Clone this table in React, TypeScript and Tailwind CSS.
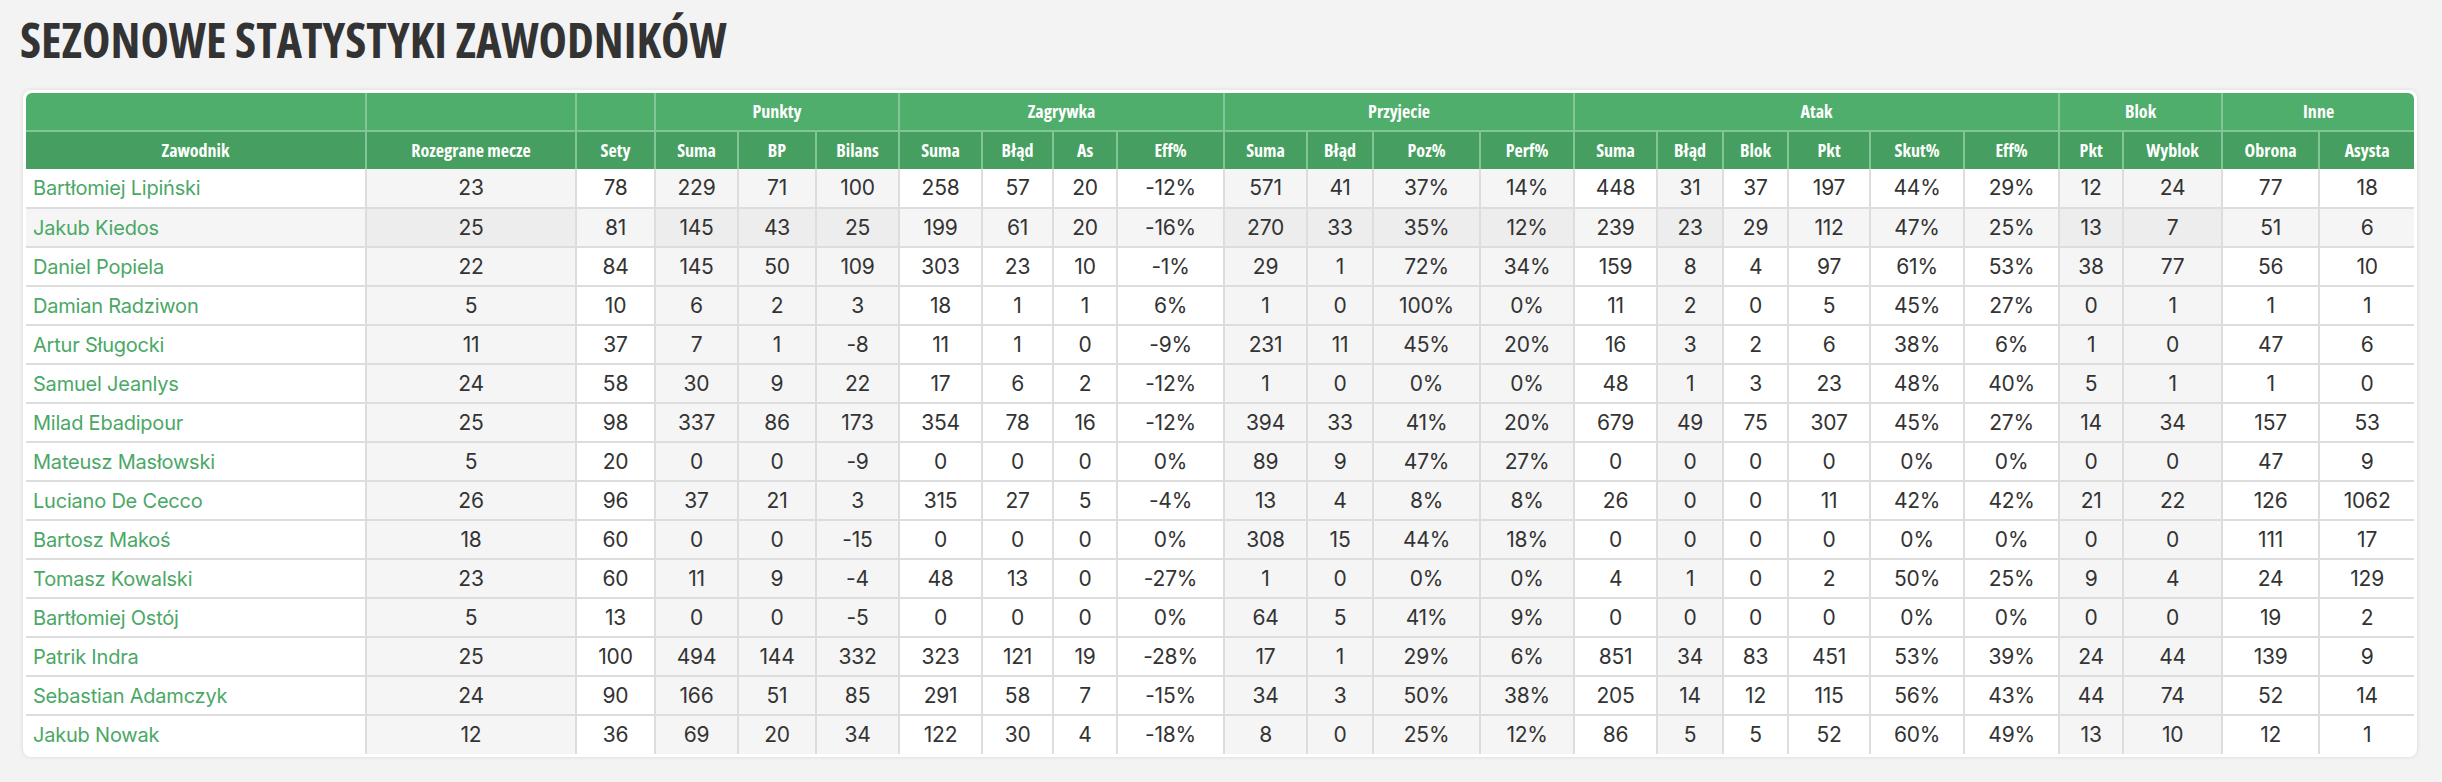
const groups = [
  { label: "", span: 1 },
  { label: "", span: 1 },
  { label: "", span: 1 },
  { label: "Punkty", span: 3 },
  { label: "Zagrywka", span: 4 },
  { label: "Przyjecie", span: 4 },
  { label: "Atak", span: 6 },
  { label: "Blok", span: 2 },
  { label: "Inne", span: 2 },
];

const columns = [
  { label: "Zawodnik", w: "w-[340px]" },
  { label: "Rozegrane mecze", w: "w-[210px]" },
  { label: "Sety", w: "w-[79px]" },
  { label: "Suma", w: "w-[83px]" },
  { label: "BP", w: "w-[78px]" },
  { label: "Bilans", w: "w-[83px]" },
  { label: "Suma", w: "w-[83px]" },
  { label: "Błąd", w: "w-[71px]" },
  { label: "As", w: "w-[64px]" },
  { label: "Eff%", w: "w-[107px]" },
  { label: "Suma", w: "w-[83px]" },
  { label: "Błąd", w: "w-[66px]" },
  { label: "Poz%", w: "w-[107px]" },
  { label: "Perf%", w: "w-[94px]" },
  { label: "Suma", w: "w-[83px]" },
  { label: "Błąd", w: "w-[66px]" },
  { label: "Blok", w: "w-[65px]" },
  { label: "Pkt", w: "w-[82px]" },
  { label: "Skut%", w: "w-[94px]" },
  { label: "Eff%", w: "w-[95px]" },
  { label: "Pkt", w: "w-[64px]" },
  { label: "Wyblok", w: "w-[99px]" },
  { label: "Obrona", w: "w-[97px]" },
  { label: "Asysta", w: "w-[95px]" },
];

// kolumny z szarym tłem (grupy naprzemiennie + podświetlona kolumna Atak/Błąd)
const shaded = new Set([1, 3, 4, 5, 10, 11, 12, 13, 15, 20, 21]);
const hoverRow = 1;

type Row = [string, ...(number | string)[]];

const rows: Row[] = [
  ["Bartłomiej Lipiński", 23, 78, 229, 71, 100, 258, 57, 20, "-12%", 571, 41, "37%", "14%", 448, 31, 37, 197, "44%", "29%", 12, 24, 77, 18],
  ["Jakub Kiedos", 25, 81, 145, 43, 25, 199, 61, 20, "-16%", 270, 33, "35%", "12%", 239, 23, 29, 112, "47%", "25%", 13, 7, 51, 6],
  ["Daniel Popiela", 22, 84, 145, 50, 109, 303, 23, 10, "-1%", 29, 1, "72%", "34%", 159, 8, 4, 97, "61%", "53%", 38, 77, 56, 10],
  ["Damian Radziwon", 5, 10, 6, 2, 3, 18, 1, 1, "6%", 1, 0, "100%", "0%", 11, 2, 0, 5, "45%", "27%", 0, 1, 1, 1],
  ["Artur Sługocki", 11, 37, 7, 1, -8, 11, 1, 0, "-9%", 231, 11, "45%", "20%", 16, 3, 2, 6, "38%", "6%", 1, 0, 47, 6],
  ["Samuel Jeanlys", 24, 58, 30, 9, 22, 17, 6, 2, "-12%", 1, 0, "0%", "0%", 48, 1, 3, 23, "48%", "40%", 5, 1, 1, 0],
  ["Milad Ebadipour", 25, 98, 337, 86, 173, 354, 78, 16, "-12%", 394, 33, "41%", "20%", 679, 49, 75, 307, "45%", "27%", 14, 34, 157, 53],
  ["Mateusz Masłowski", 5, 20, 0, 0, -9, 0, 0, 0, "0%", 89, 9, "47%", "27%", 0, 0, 0, 0, "0%", "0%", 0, 0, 47, 9],
  ["Luciano De Cecco", 26, 96, 37, 21, 3, 315, 27, 5, "-4%", 13, 4, "8%", "8%", 26, 0, 0, 11, "42%", "42%", 21, 22, 126, 1062],
  ["Bartosz Makoś", 18, 60, 0, 0, -15, 0, 0, 0, "0%", 308, 15, "44%", "18%", 0, 0, 0, 0, "0%", "0%", 0, 0, 111, 17],
  ["Tomasz Kowalski", 23, 60, 11, 9, -4, 48, 13, 0, "-27%", 1, 0, "0%", "0%", 4, 1, 0, 2, "50%", "25%", 9, 4, 24, 129],
  ["Bartłomiej Ostój", 5, 13, 0, 0, -5, 0, 0, 0, "0%", 64, 5, "41%", "9%", 0, 0, 0, 0, "0%", "0%", 0, 0, 19, 2],
  ["Patrik Indra", 25, 100, 494, 144, 332, 323, 121, 19, "-28%", 17, 1, "29%", "6%", 851, 34, 83, 451, "53%", "39%", 24, 44, 139, 9],
  ["Sebastian Adamczyk", 24, 90, 166, 51, 85, 291, 58, 7, "-15%", 34, 3, "50%", "38%", 205, 14, 12, 115, "56%", "43%", 44, 74, 52, 14],
  ["Jakub Nowak", 12, 36, 69, 20, 34, 122, 30, 4, "-18%", 8, 0, "25%", "12%", 86, 5, 5, 52, "60%", "49%", 13, 10, 12, 1],
];

function cellBg(ri: number, ci: number) {
  const colShade = shaded.has(ci);
  if (ri === hoverRow) return colShade ? "bg-[#ededed]" : "bg-[#f5f5f5]";
  return colShade ? "bg-[#f5f5f5]" : "bg-white";
}

export default function App() {
  return (
    <div className="min-h-screen bg-[#f3f3f3] px-[23px] pt-[12px] pb-6">
      <h1 className="mb-[22px] ml-[-3px] text-[48px] font-bold leading-[56px] text-[#333] [font-family:'Open_Sans',sans-serif] font-stretch-condensed">
        SEZONOWE STATYSTYKI ZAWODNIKÓW
      </h1>

      <div className="w-[2394px] rounded-lg bg-white p-[3px] shadow-[0_0_4px_rgba(0,0,0,0.12)]">
        <table className="w-[2388px] table-fixed border-collapse [font-family:Inter,'Liberation_Sans',sans-serif]">
          <colgroup>
            {columns.map((c, i) => (
              <col key={i} className={c.w} />
            ))}
          </colgroup>
          <thead className="[font-family:'Open_Sans',sans-serif] font-stretch-condensed text-[18px] font-bold text-white">
            <tr className="h-[38px] bg-[#4fae6c]">
              {groups.map((g, i) => (
                <th
                  key={i}
                  colSpan={g.span}
                  className={`border-b-2 border-[#82c698] text-center font-bold ${i > 0 ? "border-l-2" : ""} ${i === 0 ? "rounded-tl-md" : ""} ${i === groups.length - 1 ? "rounded-tr-md" : ""}`}
                >
                  {g.label}
                </th>
              ))}
            </tr>
            <tr className="h-[38px] bg-[#469f60]">
              {columns.map((c, i) => (
                <th key={i} className={`border-[#82c698] text-center font-bold ${i > 0 ? "border-l-2" : ""}`}>
                  {c.label}
                </th>
              ))}
            </tr>
          </thead>
          <tbody className="text-[21px] tracking-[-0.01em] text-[#333]">
            {rows.map((r, ri) => (
              <tr key={ri} className={`h-[39px] ${ri < rows.length - 1 ? "border-b-2 border-[#dddddd]" : ""}`}>
                {r.map((v, ci) =>
                  ci === 0 ? (
                    <td key={ci} className={`pl-[7px] text-left text-[20px] text-[#4aa866] ${cellBg(ri, ci)}`}>
                      {v}
                    </td>
                  ) : (
                    <td key={ci} className={`border-l-2 border-[#dddddd] text-center ${cellBg(ri, ci)}`}>
                      {v}
                    </td>
                  )
                )}
              </tr>
            ))}
          </tbody>
        </table>
      </div>
    </div>
  );
}
